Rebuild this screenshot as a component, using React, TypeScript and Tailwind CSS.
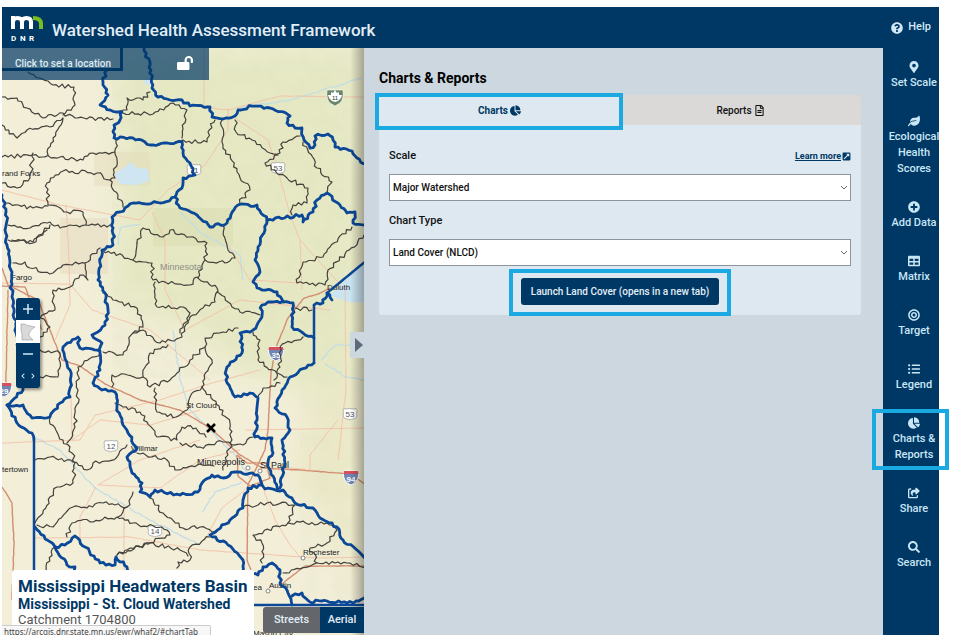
import React, { useState } from "react";
import {
  FaBullseye,
  FaChartPie,
  FaChevronLeft,
  FaChevronRight,
  FaExternalLinkSquareAlt,
  FaLeaf,
  FaListUl,
  FaLockOpen,
  FaMapMarkerAlt,
  FaPlusCircle,
  FaQuestionCircle,
  FaRegFileAlt,
  FaSearch,
  FaTable,
} from "react-icons/fa";
import { FaShareFromSquare } from "react-icons/fa6";

// Watershed boundaries, as "x,y x,y ..." lists in map units
const MAJOR_BASINS = [
  "144,48 151,70 152,88 158,97 170,100 182,100 190,106 210,107 212,117 223,119 235,116 238,110 252,106 270,108 290,116 287,123 295,128 302,128 304,140 310,148 315,145 315,136 328,134 333,140 335,147 352,151 357,158 366,164",
  "107,70 103,82 108,95 100,105 110,110 122,112 120,120 114,125 114,138 133,138 150,145 182,142",
  "182,142 183,153 190,163 195,175 183,178 182,188 177,192 175,197 160,203 133,203 128,206 120,212 112,217 113,228 113,245 102,250 100,263 98,280 105,293 108,310 105,325 92,335 102,343 100,353 100,370 93,383 102,390 115,392 117,407 122,422 128,433 137,448 127,457 132,473 142,483 140,492 150,497 155,490 180,495 198,492 202,483 212,475 223,478 235,472 258,475 262,485 265,489 283,490 295,503 313,508 320,518 337,527 343,540 366,559",
  "175,197 180,208 197,215 210,227 227,223 238,205 257,205 267,220 302,215 303,222 313,212 317,200 327,193 340,205 347,213 355,212 353,223 366,227",
  "267,220 265,230 258,247 255,260 260,272 253,282 257,288 277,292 283,302 293,303 292,327 303,333 314,338",
  "314,305 323,303 327,293 332,300",
  "283,301 268,302 262,305 260,320 253,330 240,333 242,353 227,367 226,380 235,397 250,393 258,398 257,420 255,437 272,438 273,453 268,463 278,490",
  "314,363 290,377 282,390 275,408 287,417 290,430 282,440 285,463 280,488",
  "262,485 248,488 243,500 243,508 230,520 210,535 228,545 243,560 243,572 258,575 263,567 272,563 280,570 280,583 288,593 292,605",
  "292,596 302,593 310,602 327,601 347,603 356,601 366,597",
  "2,195 6,212 7,245 10,263 12,297 16,327 20,360 23,390 7,405 23,405 32,418 50,417 60,403 70,397 70,370 63,347 78,337 80,348 100,351",
  "7,405 17,423 32,433 34,440",
  "35,527 55,547 67,565 75,567 75,575",
  "55,547 65,545 75,536 100,563 115,565 116,557 127,567 128,575",
];

const BORDERS = ["327,293 366,261", "314,305 314,363", "34,440 34,580", "253,605 366,605"];

const WATERSHEDS = [
  "28,72 53,85 74,87 75,105 63,115",
  "2,97 17,98 27,108 43,118 63,113 75,118 113,119",
  "2,125 17,138 27,130 50,127 63,118 53,138 48,155",
  "2,157 33,155 60,157 83,160 93,153 115,152",
  "116,140 115,178 110,180 118,195 123,207",
  "110,180 97,173 63,171 47,183 48,205 67,212 83,212 86,225 110,225",
  "7,203 33,208 48,206",
  "8,225 30,228 50,222 60,228 70,225 86,225",
  "8,240 33,242 50,225",
  "33,153 30,178 17,188 2,183",
  "150,92 143,100 127,98 127,110 117,112",
  "123,113 153,114 173,103 187,110 182,138",
  "180,141 207,142 208,132 215,120",
  "222,120 223,145 237,172 250,190 237,205",
  "235,120 236,132 252,140 270,153 280,153 283,142 300,136",
  "278,155 265,163 287,178 308,188 307,203 293,205 292,215",
  "303,142 317,168 332,182 327,193",
  "223,225 228,250 235,258 225,263 205,260",
  "137,243 143,228 163,237 170,230 190,237 207,243 205,260 198,278",
  "352,227 330,247 323,257 303,262 297,283 325,285 328,270 345,254 364,235",
  "12,240 33,243 47,230",
  "13,263 25,262 30,268 53,273 63,265 85,263 100,248",
  "85,263 88,280 80,275 70,287 53,290 55,310 40,318 50,327 40,337",
  "103,250 133,260 152,263 153,280 190,285 197,277 217,288 215,302 203,308 190,317 180,333",
  "133,260 137,243",
  "103,293 113,300 137,308 143,327 133,333 123,355 103,352",
  "155,282 157,307 183,307 190,313 182,337 160,343 143,330 133,333",
  "217,292 228,302 240,312 260,315",
  "238,328 223,332 205,338 205,347 190,360 170,380 150,387 143,377 150,353 168,345",
  "205,347 212,360 202,387 213,400 230,423 232,440 223,470",
  "202,387 190,397 187,410 176,417 157,412 155,388",
  "253,332 260,340 258,360 277,373 287,377",
  "280,383 263,388 258,398",
  "303,337 280,347 280,367 274,380",
  "295,308 312,310",
  "40,350 60,353 58,377 40,377",
  "100,353 78,367 78,390 75,427 67,443",
  "112,387 112,375 143,377",
  "115,403 140,412 157,437 177,440 182,427 196,428 206,437",
  "50,417 50,424 63,440 72,453 75,463 73,483 57,487 35,523",
  "35,460 50,457 73,462 87,470 93,463 117,457 127,445",
  "137,453 167,460 175,470 200,464 214,466",
  "37,525 53,527 73,507 87,508 103,503 127,507 133,492",
  "127,507 118,517",
  "67,537 72,523 117,517 133,523 167,530 170,535 117,555",
  "150,498 163,513 183,528 200,527 216,531",
  "117,555 150,543 180,550 188,556",
  "177,568 178,562 190,560 190,547 210,537",
  "45,572 55,547",
  "180,443 200,447 223,442 243,445 253,437",
  "243,507 267,503 295,505 288,523 253,535 262,543 262,563",
  "288,523 327,523 337,530 327,543 310,548 317,563 283,573",
  "317,563 347,563 366,567",
];

const MINOR_ROADS = [
  "204,48 204,107 228,110 280,96 366,97",
  "228,108 228,130 205,165 168,190 140,220 60,205 2,190",
  "235,118 268,140 278,170 290,215 300,240 302,290",
  "66,205 69,260 70,305 55,340",
  "2,283 70,284 92,310 150,330 210,380",
  "152,212 165,240 165,290 185,330 240,300 330,310",
  "2,443 80,440 95,415 160,400 205,385 260,370",
  "71,395 72,440 100,420 150,425 200,410",
  "35,538 130,537 200,550 320,558 366,557",
  "124,505 124,570",
  "98,485 160,488 200,460 240,450",
  "96,487 80,517 80,545",
  "260,480 275,520 290,545 303,560",
  "300,240 345,290 346,390 338,460",
  "245,430 366,428",
  "225,240 250,280 300,283",
  "98,485 140,460 200,440",
  "338,420 310,455 310,470 290,468",
  "245,490 222,508 205,540",
];

const HIGHWAYS = [
  "2,268 8,285 38,300 62,360 80,366 105,384 140,400 180,410 210,428 240,455 262,468 300,470 350,474 366,485",
  "2,286 25,287 42,330",
  "8,290 6,383",
  "304,298 288,318 277,345 271,372 268,430 265,450 248,485 247,560 251,570",
  "304,298 318,294 330,288",
  "2,487 12,503 14,545 12,600",
  "282,584 305,566 340,566 366,566",
  "237,455 247,463 266,463 270,478 250,486 238,476 237,455",
];

const RIVERS = [
  "180,212 200,232 240,255 243,280",
  "140,224 120,228 118,245",
  "240,108 290,100 362,78",
  "173,330 180,380 190,410 235,455 250,478",
  "34,437 60,450 95,488 150,520 200,545",
  "242,482 215,492 202,512",
  "322,360 335,345 364,345",
  "325,363 345,377 366,380",
];

// Breaks each straight run into short steps with a repeatable sideways wobble
function roughPath(points: string, amount: number) {
  const pts = points.split(" ").map((p) => p.split(",").map(Number));
  let seed = pts[0][0] * 31 + pts[0][1] * 17;
  const rand = () => {
    seed = (seed * 9301 + 49297) % 233280;
    return seed / 233280 - 0.5;
  };
  let d = `M${pts[0][0]} ${pts[0][1]}`;
  for (let i = 1; i < pts.length; i++) {
    const [x0, y0] = pts[i - 1];
    const [x1, y1] = pts[i];
    const len = Math.hypot(x1 - x0, y1 - y0);
    const steps = Math.max(1, Math.round(len / 3));
    for (let s = 1; s < steps; s++) {
      const t = s / steps;
      const off = rand() * amount;
      const x = x0 + (x1 - x0) * t - ((y1 - y0) / len) * off;
      const y = y0 + (y1 - y0) * t + ((x1 - x0) / len) * off;
      d += `L${x.toFixed(1)} ${y.toFixed(1)}`;
    }
    d += `L${x1} ${y1}`;
  }
  return d;
}

function Interstate({ x, y, label }: { x: number; y: number; label: string }) {
  return (
    <g transform={`translate(${x} ${y})`}>
      <path d="M-7-6H7C9 1 5 6 0 8C-5 6-9 1-7-6Z" fill="#6f86b5" stroke="#fff" strokeWidth="1" />
      <path d="M-7-6H7L7.600-3H-7.600Z" fill="#d5505c" />
      <text y="5" textAnchor="middle" fontSize="8" fontWeight="700" fill="#fff">{label}</text>
    </g>
  );
}

function UsRoute({ x, y, label }: { x: number; y: number; label: string }) {
  return (
    <g transform={`translate(${x} ${y})`}>
      <path d="M-6-5.500L-4-5Q0-6 4-5L6-5.500L7-3Q6 0 7 2Q6 5 3 5Q1 5 0 6Q-1 5-3 5Q-6 5-7 2Q-6 0-7-3Z" fill="#fff" stroke="#999" strokeWidth="0.700" />
      <text y="3" textAnchor="middle" fontSize="8" fill="#555">{label}</text>
    </g>
  );
}

function WatershedMap() {
  return (
    <svg
      viewBox="2 48 362 587"
      preserveAspectRatio="xMinYMin slice"
      className="absolute inset-0 h-full w-full font-['Liberation_Sans']"
      role="img"
      aria-label="Map of Minnesota watersheds"
    >
      <defs>
        <filter id="relief" x="0" y="0" width="100%" height="100%">
          <feTurbulence type="fractalNoise" baseFrequency="0.06" numOctaves="4" seed="4" />
          <feColorMatrix values="0 0 0 0 0.68  0 0 0 0 0.7  0 0 0 0 0.47  0.9 0.5 0 0 -0.48" />
        </filter>
        <filter id="soft" x="-20%" y="-20%" width="140%" height="140%">
          <feGaussianBlur stdDeviation="14" />
        </filter>
      </defs>
      <rect x="2" y="48" width="362" height="587" fill="#f2eed8" />
      <g filter="url(#soft)">
        <path d="M115 48H364V420L300 390L240 370L195 330L110 300L120 200Z" fill="#e6e9c4" />
        <path d="M320 380L364 370V610L330 520L290 480Z" fill="#ebe9c8" />
      </g>
      <rect x="60" y="218" width="48" height="56" fill="#e7dcc3" opacity="0.600" />
      <rect x="94" y="152" width="56" height="34" fill="#e6dcbb" opacity="0.500" />
      <rect x="153" y="208" width="80" height="38" fill="#dadbae" opacity="0.500" />
      <rect x="112" y="48" width="252" height="330" filter="url(#relief)" opacity="0.350" />
      <rect x="300" y="378" width="64" height="257" filter="url(#relief)" opacity="0.300" />

      <path d="M114 174L124 168L131 162L137 168L148 169L149 181L137 185L120 184Z" fill="#cfe5f2" />
      <path d="M330 295L364 262V302Q346 304 330 295Z" fill="#cbe4f2" />
      <path d="M142 78L153 80L154 86L145 84Z" fill="#cfe5f2" />

      <g fill="none" strokeLinejoin="round">
        {RIVERS.map((p) => (
          <path key={p} d={roughPath(p, 1.5)} stroke="#bfdde6" strokeWidth="1.200" />
        ))}
        {MINOR_ROADS.map((p) => (
          <path key={p} d={roughPath(p, 0.5)} stroke="#f4bfa6" strokeWidth="0.900" />
        ))}
        {HIGHWAYS.map((p) => (
          <path key={p} d={roughPath(p, 0.5)} stroke="#d38e72" strokeWidth="1.400" />
        ))}
      </g>

      <g fill="#222" fontSize="8">
        <text x="2" y="176">rand Forks</text>
        <text x="11" y="280">Fargo</text>
        <text x="160" y="270" fontSize="9" fill="#8d8d83">Minnesota</text>
        <text x="327" y="290">Duluth</text>
        <text x="186" y="408">St Cloud</text>
        <text x="131" y="451">Willmar</text>
        <text x="197" y="465" fontSize="9">Minneapolis</text>
        <text x="260" y="468" fontSize="9">St Paul</text>
        <text x="2" y="472">tertown</text>
        <text x="303" y="555">Rochester</text>
        <text x="269" y="588">Austin</text>
        <text x="253" y="590">ea</text>
        <text x="253" y="636">Mason City</text>
      </g>
      <g fill="#fff" stroke="#777" strokeWidth="0.900">
        <circle cx="248" cy="468" r="2" />
        <circle cx="260" cy="471" r="2" />
        <circle cx="303" cy="558" r="2" />
        <circle cx="268" cy="591" r="2" />
      </g>

      <UsRoute x={194} y={170} label="71" />
      <UsRoute x={278} y={168} label="53" />
      <UsRoute x={350} y={414} label="53" />
      <UsRoute x={111} y={446} label="12" />
      <UsRoute x={155} y={531} label="14" />
      <Interstate x={276} y={353} label="35" />
      <Interstate x={351} y={477} label="94" />
      <Interstate x={4} y={389} label="29" />
      <g transform="translate(335 97)">
        <path d="M-8-7H8Q9 2 5 6L0 9L-5 6Q-9 2-8-7Z" fill="#69856a" stroke="#fff" strokeWidth="0.600" />
        <path d="M0-7L2-4L4-5L4-2L7-2L6 1L3 4L0 5L-3 4L-6 1L-7-2L-4-2L-4-5L-2-4Z" fill="#fff" />
        <text y="3" textAnchor="middle" fontSize="6" fill="#333">11</text>
      </g>

      <g fill="none" strokeLinejoin="round" strokeLinecap="round">
        {WATERSHEDS.map((p) => (
          <path key={p} d={roughPath(p, 4)} stroke="#45433c" strokeWidth="1.200" />
        ))}
        {MAJOR_BASINS.map((p) => (
          <path key={p} d={roughPath(p, 3)} stroke="#0b4897" strokeWidth="2.800" />
        ))}
        {BORDERS.map((p) => (
          <path key={p} d={roughPath(p, 0)} stroke="#0b4897" strokeWidth="2.500" />
        ))}
      </g>
      <path d="M207 424L215 432M215 424L207 432" stroke="#000" strokeWidth="2.500" />
    </svg>
  );
}

function Logo() {
  return (
    <svg viewBox="0 0 34 28" className="h-7 w-[34px]" role="img" aria-label="Minnesota DNR">
      <g fill="none" strokeWidth="4">
        <path d="M3 15V2M3 8Q3 4 7.500 4Q12 4 12 8V15M12 8Q12 4 16.500 4Q21 4 21 8V15" stroke="#fff" />
        <path d="M23 4Q31 4 31 10V15" stroke="#78be21" />
      </g>
      <text x="1" y="27" fontSize="8" fontWeight="700" fill="#fff">D</text>
      <text x="10" y="27" fontSize="8" fontWeight="700" fill="#fff">N</text>
      <text x="19" y="27" fontSize="8" fontWeight="700" fill="#fff">R</text>
    </svg>
  );
}

// Bright outline laid over a control to call it out
function Callout({ className }: { className: string }) {
  return <span className={`pointer-events-none absolute z-20 border-4 border-[#1ba9e1] ${className}`} />;
}

function SelectField({ id, label, options, children }: { id: string; label: string; options: string[]; children?: React.ReactNode }) {
  return (
    <div>
      <div className="mb-2 flex items-center justify-between">
        <label htmlFor={id} className="text-[11px] leading-5 font-medium">{label}</label>
        {children}
      </div>
      <div className="relative">
        <select
          id={id}
          className="block h-[27px] w-full appearance-none border border-[#8b949c] bg-white px-[3px] text-[10px] font-medium text-[#111]"
        >
          {options.map((o) => (
            <option key={o}>{o}</option>
          ))}
        </select>
        <svg viewBox="0 0 8 6" className="pointer-events-none absolute top-[11px] right-[3px] h-[6px] w-2">
          <path d="M1 1L4 4L7 1" fill="none" stroke="#666" strokeWidth="1" />
        </svg>
      </div>
    </div>
  );
}

const NAV_ITEMS = [
  { label: "Set Scale", icon: FaMapMarkerAlt },
  { label: "Ecological Health Scores", icon: FaLeaf },
  { label: "Add Data", icon: FaPlusCircle },
  { label: "Matrix", icon: FaTable },
  { label: "Target", icon: FaBullseye },
  { label: "Legend", icon: FaListUl },
  { label: "Charts & Reports", icon: FaChartPie },
  { label: "Share", icon: FaShareFromSquare },
  { label: "Search", icon: FaSearch },
];

export default function App() {
  const [tab, setTab] = useState<"charts" | "reports">("charts");

  return (
    <div className="h-screen overflow-hidden bg-white py-[7px] pr-[19px] pl-[2px] font-['Roboto',sans-serif] text-[#111]">
      <div className="flex h-full flex-col">
        <header className="flex h-[41px] shrink-0 items-center bg-[#003865] pl-2 text-white">
          <Logo />
          <h1 className="ml-2 pt-[6px] text-[17px] font-medium text-[#e2eef7]">
            Watershed Health Assessment Framework
          </h1>
          <a href="#help" className="mr-2 ml-auto flex items-center gap-[5px] text-[11px] font-medium text-[#d2e8f5]">
            <FaQuestionCircle size={12} />
            Help
          </a>
        </header>

        <div className="grid min-h-0 flex-1 grid-cols-[minmax(0,362fr)_minmax(0,519fr)_56px]">
          {/* Map */}
          <section className="relative">
            <div className="absolute inset-0 overflow-hidden">
              <WatershedMap />
              <div className="absolute inset-y-0 right-0 w-[14px] bg-linear-to-r from-transparent to-black/30" />

              <div className="absolute top-0 left-0 flex h-8 w-[207px] items-start bg-[#003865]/70">
                <button className="h-[23px] w-[121px] border-r-3 border-b-3 border-[#003865] pt-2 pl-1 text-[10px] font-medium text-[#dcebf5]">
                  Click to set a location
                </button>
                <button aria-label="Unlock" className="mt-[7px] ml-[54px] text-white">
                  <FaLockOpen size={16} />
                </button>
              </div>

              <div className="absolute top-[250px] left-[14px] flex w-6 flex-col rounded-[3px] bg-[#003865] text-[#d2e8f5] shadow-[2px_2px_3px_rgba(0,0,0,0.4)]">
                <button aria-label="Zoom in" className="flex h-[22px] items-center justify-center">
                  <svg viewBox="0 0 12 12" className="h-3 w-3">
                    <path d="M6 1V11M1 6H11" stroke="currentColor" strokeWidth="1.500" />
                  </svg>
                </button>
                <button aria-label="Full extent" className="flex h-[23px] items-center justify-center bg-white">
                  <svg viewBox="0 0 16 18" className="h-[18px] w-4">
                    <path d="M1 1H5L6 2L15 4Q10 7 10 9Q8 11 9 13L13 17H2V11L1 8Z" fill="#d9d9d9" stroke="#999" strokeWidth="0.600" />
                  </svg>
                </button>
                <button aria-label="Zoom out" className="flex h-[21px] items-center justify-center">
                  <svg viewBox="0 0 12 12" className="h-3 w-3">
                    <path d="M1 6H11" stroke="currentColor" strokeWidth="1.500" />
                  </svg>
                </button>
                <div className="flex h-6 items-center justify-between px-1">
                  <button aria-label="Previous extent"><FaChevronLeft size={6} /></button>
                  <button aria-label="Next extent"><FaChevronRight size={6} /></button>
                </div>
              </div>

              <div className="absolute bottom-0 left-[10px] h-[65px] w-[242px] rounded-t-[3px] bg-white px-[6px] pt-[6px] font-bold whitespace-nowrap text-[#003865]">
                <h2 className="text-[17px] leading-5">Mississippi Headwaters Basin</h2>
                <h3 className="text-[14px] leading-4">Mississippi - St. Cloud Watershed</h3>
                <p className="text-[13px] leading-4 font-normal text-[#555]">Catchment 1704800</p>
              </div>

              <div className="absolute right-0 bottom-[2px] flex h-[26px] overflow-hidden rounded-l-[3px] text-[11px] font-medium text-[#e2eef7]">
                <button className="w-[57px] bg-[#63666a]">Streets</button>
                <button className="w-11 bg-[#003865]">Aerial</button>
              </div>

              <div className="absolute bottom-0 left-0 h-[10px] w-[209px] overflow-hidden rounded-tr-[2px] border-t border-r border-[#ccc] bg-[#f7f7f7] pl-[2px] font-['Noto_Sans'] text-[8px] leading-[12px] whitespace-nowrap text-[#444]">
                https://arcgis.dnr.state.mn.us/ewr/whaf2/#chartTab
              </div>
            </div>

            <button
              aria-label="Collapse panel"
              className="absolute top-[284px] -right-1 z-10 flex h-[26px] w-[18px] items-center justify-center bg-[#cdd7df]"
            >
              <svg viewBox="0 0 8 14" className="h-[14px] w-2">
                <path d="M0 0L8 7L0 14Z" fill="#5d6a7a" />
              </svg>
            </button>
          </section>

          {/* Charts & reports panel */}
          <main className="bg-[#cdd7df] pt-5 pr-[22px] pl-[15px]">
            <h2 className="mb-[7px] text-[14px] leading-5 font-bold text-black">Charts &amp; Reports</h2>
            <div role="tablist" className="flex h-[30px] text-[10px]">
              <button
                role="tab"
                aria-selected={tab === "charts"}
                onClick={() => setTab("charts")}
                className="relative flex flex-1 items-center justify-center gap-[2px] bg-[#dde8f0] font-bold text-[#003865]"
              >
                Charts <FaChartPie size={11} />
                <Callout className="-top-[2px] -right-[3px] -bottom-[5px] -left-1" />
              </button>
              <button
                role="tab"
                aria-selected={tab === "reports"}
                onClick={() => setTab("reports")}
                className="flex flex-1 items-center justify-center gap-[2px] rounded-tr-[3px] bg-[#dad9d7] font-medium"
              >
                Reports <FaRegFileAlt size={11} />
              </button>
            </div>

            <div className="flex flex-col gap-[10px] rounded-b-[3px] bg-[#dde8f0] px-[10px] pt-[21px] pb-[10px]">
              <SelectField id="scale" label="Scale" options={["Major Watershed", "Catchment"]}>
                <a href="#learn" className="flex items-center gap-px text-[9px] leading-3 font-bold text-[#003865] underline">
                  Learn more <FaExternalLinkSquareAlt size={9} />
                </a>
              </SelectField>
              <SelectField id="chart-type" label="Chart Type" options={["Land Cover (NLCD)", "Population"]} />
              <button className="relative mt-[2px] h-[27px] w-[198px] self-center rounded-[3px] bg-[#003865] text-[10px] font-medium whitespace-nowrap text-[#e2eef7]">
                Launch Land Cover (opens in a new tab)
                <Callout className="-inset-x-3 -top-[9px] -bottom-[11px]" />
              </button>
            </div>
          </main>

          {/* Tool rail */}
          <nav className="bg-[#003865]">
            {NAV_ITEMS.map(({ label, icon: Icon }) => (
              <a
                key={label}
                href="#tool"
                className="relative flex flex-col items-center py-[11px] pl-[6px] text-center text-[11px] leading-4 font-medium text-[#c9e6f5]"
              >
                <span className="flex h-4 items-center">
                  <Icon size={12} />
                </span>
                {label}
                {label === "Charts & Reports" && <Callout className="top-[5px] -right-[10px] bottom-1 -left-[11px]" />}
              </a>
            ))}
          </nav>
        </div>
      </div>
    </div>
  );
}
